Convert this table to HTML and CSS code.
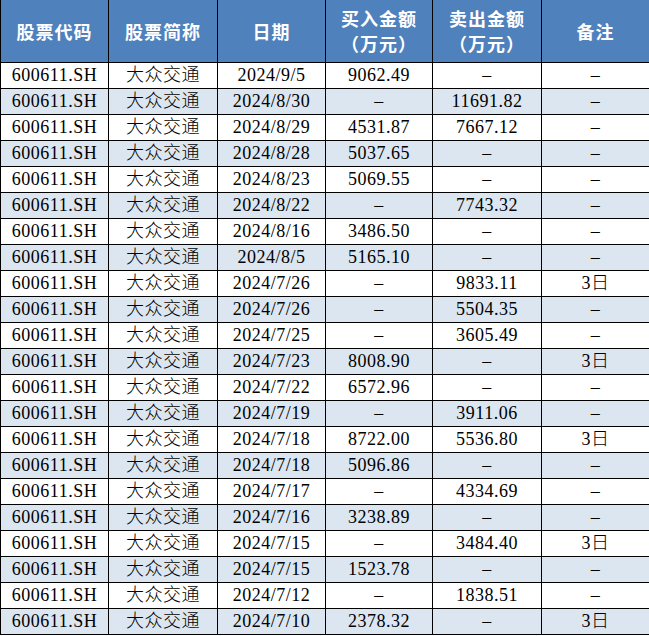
FILE: index.html
```html
<!DOCTYPE html>
<html lang="zh-CN">
<head>
<meta charset="utf-8">
<link rel="stylesheet" href="styles.css">
</head>
<body>
<table class="trades">
  <colgroup>
    <col class="c1"><col class="c2"><col class="c3"><col class="c4"><col class="c5"><col class="c6">
  </colgroup>
  <thead>
    <tr>
      <th>股票代码</th>
      <th>股票简称</th>
      <th>日期</th>
      <th>买入金额<br>（万元）</th>
      <th>卖出金额<br>（万元）</th>
      <th>备注</th>
    </tr>
  </thead>
  <tbody>
    <tr><td>600611.SH</td><td>大众交通</td><td>2024/9/5</td><td>9062.49</td><td>–</td><td>–</td></tr>
    <tr><td>600611.SH</td><td>大众交通</td><td>2024/8/30</td><td>–</td><td>11691.82</td><td>–</td></tr>
    <tr><td>600611.SH</td><td>大众交通</td><td>2024/8/29</td><td>4531.87</td><td>7667.12</td><td>–</td></tr>
    <tr><td>600611.SH</td><td>大众交通</td><td>2024/8/28</td><td>5037.65</td><td>–</td><td>–</td></tr>
    <tr><td>600611.SH</td><td>大众交通</td><td>2024/8/23</td><td>5069.55</td><td>–</td><td>–</td></tr>
    <tr><td>600611.SH</td><td>大众交通</td><td>2024/8/22</td><td>–</td><td>7743.32</td><td>–</td></tr>
    <tr><td>600611.SH</td><td>大众交通</td><td>2024/8/16</td><td>3486.50</td><td>–</td><td>–</td></tr>
    <tr><td>600611.SH</td><td>大众交通</td><td>2024/8/5</td><td>5165.10</td><td>–</td><td>–</td></tr>
    <tr><td>600611.SH</td><td>大众交通</td><td>2024/7/26</td><td>–</td><td>9833.11</td><td>3日</td></tr>
    <tr><td>600611.SH</td><td>大众交通</td><td>2024/7/26</td><td>–</td><td>5504.35</td><td>–</td></tr>
    <tr><td>600611.SH</td><td>大众交通</td><td>2024/7/25</td><td>–</td><td>3605.49</td><td>–</td></tr>
    <tr><td>600611.SH</td><td>大众交通</td><td>2024/7/23</td><td>8008.90</td><td>–</td><td>3日</td></tr>
    <tr><td>600611.SH</td><td>大众交通</td><td>2024/7/22</td><td>6572.96</td><td>–</td><td>–</td></tr>
    <tr><td>600611.SH</td><td>大众交通</td><td>2024/7/19</td><td>–</td><td>3911.06</td><td>–</td></tr>
    <tr><td>600611.SH</td><td>大众交通</td><td>2024/7/18</td><td>8722.00</td><td>5536.80</td><td>3日</td></tr>
    <tr><td>600611.SH</td><td>大众交通</td><td>2024/7/18</td><td>5096.86</td><td>–</td><td>–</td></tr>
    <tr><td>600611.SH</td><td>大众交通</td><td>2024/7/17</td><td>–</td><td>4334.69</td><td>–</td></tr>
    <tr><td>600611.SH</td><td>大众交通</td><td>2024/7/16</td><td>3238.89</td><td>–</td><td>–</td></tr>
    <tr><td>600611.SH</td><td>大众交通</td><td>2024/7/15</td><td>–</td><td>3484.40</td><td>3日</td></tr>
    <tr><td>600611.SH</td><td>大众交通</td><td>2024/7/15</td><td>1523.78</td><td>–</td><td>–</td></tr>
    <tr><td>600611.SH</td><td>大众交通</td><td>2024/7/12</td><td>–</td><td>1838.51</td><td>–</td></tr>
    <tr><td>600611.SH</td><td>大众交通</td><td>2024/7/10</td><td>2378.32</td><td>–</td><td>3日</td></tr>
  </tbody>
</table>
</body>
</html>
```
FILE: styles.css
```css
html, body {
  margin: 0;
  padding: 0;
  background: #ffffff;
}

.trades {
  width: 649px;
  border-collapse: collapse;
  table-layout: fixed;
  font-family: "Liberation Serif", "Noto Sans CJK SC", serif;
  font-size: 18px;
  color: #000000;
}

.c1 { width: 108px; }
.c2 { width: 109px; }
.c3 { width: 108px; }
.c4 { width: 107px; }
.c5 { width: 109px; }
.c6 { width: 108px; }

.trades th {
  background: #4f81bd;
  color: #ffffff;
  font-weight: 700;
  font-family: "Noto Sans CJK SC", sans-serif;
  font-size: 18px;
  line-height: 25px;
  height: 62px;
  padding: 0;
  text-align: center;
  vertical-align: middle;
  border-left: 1px solid #000000;
  border-right: 1px solid #000000;
  border-bottom: 1px solid #000000;
  letter-spacing: 1px;
}

.trades td {
  height: 25px;
  padding: 0;
  text-align: center;
  vertical-align: middle;
  line-height: 25px;
  font-weight: 300;
  letter-spacing: 0.5px;
  border: 1px solid #000000;
  white-space: nowrap;
}

.trades tbody tr:nth-child(even) td {
  background: #dce6f1;
}
```
